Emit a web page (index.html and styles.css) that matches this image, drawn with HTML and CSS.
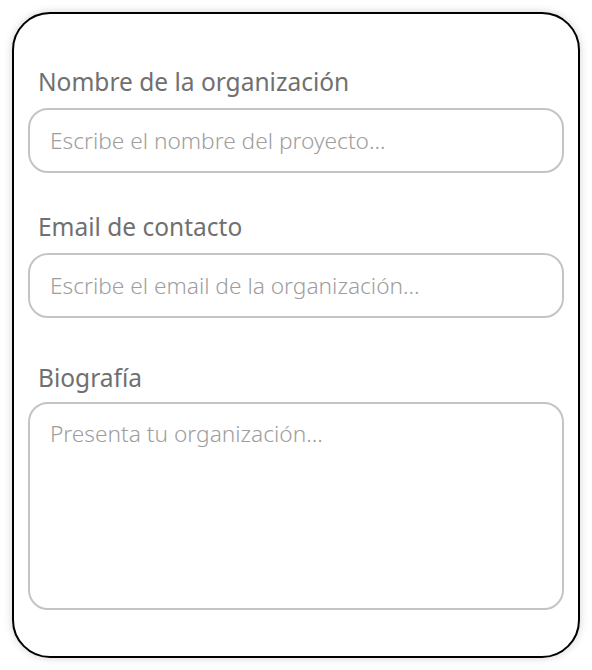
FILE: index.html
```html
<!DOCTYPE html>
<html lang="es">
<head>
<meta charset="utf-8">
<link rel="stylesheet" href="styles.css">
</head>
<body>
<div class="page">
  <form class="card">
    <div class="field">
      <label class="label" for="name">Nombre de la organización</label>
      <input class="input" id="name" type="text" placeholder="Escribe el nombre del proyecto...">
    </div>
    <div class="field">
      <label class="label" for="email">Email de contacto</label>
      <input class="input" id="email" type="email" placeholder="Escribe el email de la organización...">
    </div>
    <div class="field field-bio">
      <label class="label" for="bio">Biografía</label>
      <textarea class="textarea" id="bio" placeholder="Presenta tu organización..."></textarea>
    </div>
  </form>
</div>
</body>
</html>
```

FILE: styles.css
```css
* { box-sizing: border-box; }
html, body { margin: 0; padding: 0; background: #fff; }
body { font-family: "Noto Sans", "Open Sans", sans-serif; }
.page { padding: 12px; }
.card {
  width: 568px;
  height: 646px;
  border: 2px solid #000;
  border-radius: 38px;
  box-shadow: 0 0 8px rgba(0,0,0,0.18);
  background: #fff;
  padding: 52px 14px 0 14px;
  display: flex;
  flex-direction: column;
  gap: 38px;
}
.field { display: flex; flex-direction: column; gap: 10px; }
.field-bio { margin-top: 6px; gap: 8px; }
.label {
  font-size: 24.5px;
  line-height: 32px;
  color: #707070;
  padding-left: 10px;
}
.input, .textarea {
  width: 100%;
  border: 2px solid #c4c4c4;
  border-radius: 20px;
  font-family: "Noto Sans", "Open Sans", sans-serif;
  font-size: 22.7px;
  font-weight: 300;
  color: #444;
  padding: 0 20px;
  background: #fff;
  outline: none;
  margin: 0;
}
.input { height: 65px; }
.textarea {
  height: 208px;
  padding-top: 15px;
  line-height: 30px;
  resize: none;
  display: block;
}
.input::placeholder, .textarea::placeholder { color: #9e9e9e; opacity: 1; }
```
